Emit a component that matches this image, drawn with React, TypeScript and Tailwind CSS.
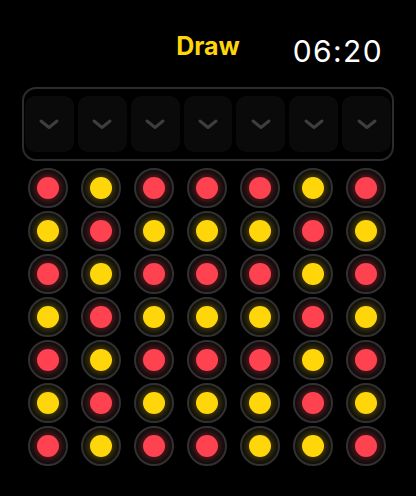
const R = 'r'
const Y = 'y'

const board: string[][] = [
  [R, Y, R, R, R, Y, R],
  [Y, R, Y, Y, Y, R, Y],
  [R, Y, R, R, R, Y, R],
  [Y, R, Y, Y, Y, R, Y],
  [R, Y, R, R, R, Y, R],
  [Y, R, Y, Y, Y, R, Y],
  [R, Y, R, R, Y, Y, R],
]

function Chevron() {
  return (
    <svg width="22" height="12" viewBox="0 0 22 12" fill="none" className="shrink-0">
      <path
        d="M3 3l8 6.5 8-6.5"
        stroke="#3e3e3e"
        strokeWidth="3"
        strokeLinecap="round"
        strokeLinejoin="round"
      />
    </svg>
  )
}

function Disc({ color }: { color: string }) {
  return (
    <div className="flex h-[40px] w-[40px] items-center justify-center overflow-hidden rounded-full border-2 border-[#313131] bg-[#0a0a0a]">
      {color === R ? (
        <div className="h-[22px] w-[22px] rounded-full bg-[#ff4250] shadow-[0_0_7px_3px_rgba(255,66,80,0.3)]" />
      ) : (
        <div className="h-[22px] w-[22px] rounded-full bg-[#ffd60a] shadow-[0_0_7px_3px_rgba(255,214,10,0.25)]" />
      )}
    </div>
  )
}

export default function App() {
  return (
    <div className="h-[496px] w-[416px] overflow-hidden bg-black font-['Inter','Noto_Sans',sans-serif]">
      <div className="grid grid-cols-3 items-start pt-[34px]">
        <div />
        <div className="text-center text-[25px] font-bold leading-[24px] text-[#ffd60a]">Draw</div>
        <div className="mt-[2px] pr-[33px] text-right text-[30px] font-normal leading-[30px] tracking-[0.045em] text-white">
          06:20
        </div>
      </div>

      <div className="mx-[22px] mt-[21px] flex gap-[4px] rounded-[14px] border-2 border-[#2c2c2c] px-[1px] py-[7px]">
        {Array.from({ length: 7 }).map((_, i) => (
          <div key={i} className="flex h-[56px] flex-1 items-center justify-center rounded-[10px] bg-[#0a0a0a]">
            <Chevron />
          </div>
        ))}
      </div>

      <div className="ml-[28px] mt-[7px] grid w-[358px] grid-cols-7 gap-x-[13px] gap-y-[3px]">
        {board.map((row, r) =>
          row.map((c, i) => <Disc key={`${r}-${i}`} color={c} />)
        )}
      </div>
    </div>
  )
}
